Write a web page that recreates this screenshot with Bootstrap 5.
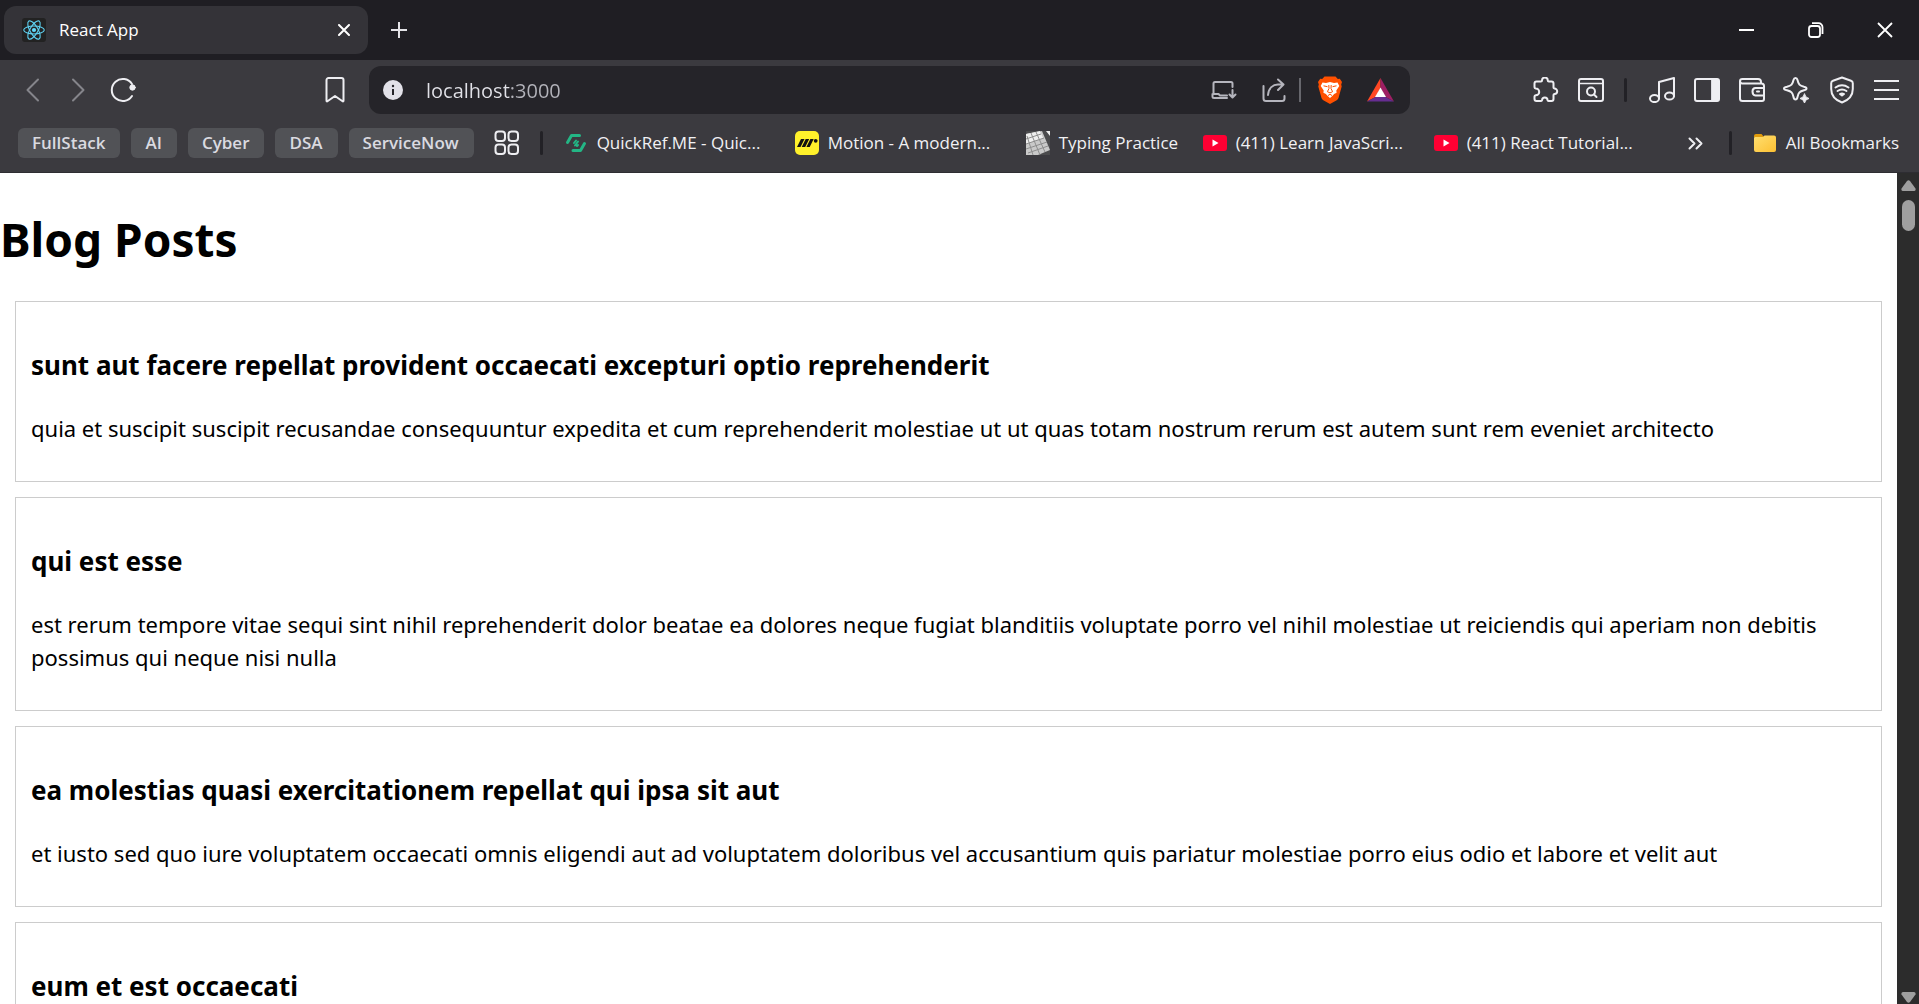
<!DOCTYPE html>
<html lang="en">
<head>
<meta charset="utf-8">
<meta name="viewport" content="width=device-width, initial-scale=1">
<title>React App</title>
<link href="https://cdn.jsdelivr.net/npm/bootstrap@5.3.0/dist/css/bootstrap.min.css" rel="stylesheet">
<style>
  body { font-family: "Open Sans", "Noto Sans", sans-serif; color: #000; background: #fff; }
  svg { display: block; flex: none; }
  .ico { fill: none; stroke: #eeeef2; stroke-width: 2; stroke-linecap: round; stroke-linejoin: round; }
  .dim { stroke: #85858b; }
  .soft { stroke: #b5b5bd; }

  .tabstrip { height: 60px; background: #1f1e23; padding: 6px 0 6px 4px; }
  .tab { width: 364px; border-radius: 12px; background: #343338; padding: 0 18px; gap: 13px; color: #fff; font-size: 17px; }
  .plain { background: none; border: 0; padding: 0; display: flex; align-items: center; justify-content: center; flex: none; }
  .newtab { width: 62px; }
  .winbtn { width: 69px; }

  .toolbar { background: #3b3a3f; height: 60px; padding: 6px 10px 0; }
  .toolbtn { width: 45px; height: 48px; }
  .leading { width: 347px; margin-right: 12px; }
  .trailing { margin-left: 113px; }
  .urlbar { height: 48px; border-radius: 12px; background: #252429; padding: 0 5px 0 14px; }
  .urlbar input { background: none; border: 0; outline: 0; padding: 2px 0 0; margin-left: 23px; color: #dcdce2; font-size: 20px; min-width: 0; }
  .urlbar input { background: linear-gradient(to right, #e2e2e8 85px, #b4b4bb 85px) text; -webkit-background-clip: text; -webkit-text-fill-color: transparent; }
  .urlbtn { width: 50px; height: 48px; }
  .rule { width: 3px; height: 24px; border-radius: 2px; background: #222126; flex: none; }
  .trailing .rule { margin: 0 12px 0 11px; }
  .rule-light { width: 2px; background: #67676d; border-radius: 0; margin-right: 4px; }

  .bookmarks { background: #3b3a3f; height: 53px; padding: 8px 20px 14px 18px; border-bottom: 1px solid #2e2d32; font-size: 17px; }
  .bookmarks a { color: #f1f1f4; text-decoration: none; white-space: nowrap; }
  .bookmarks .chip { height: 30px; padding: 0 15px 0 14px; border-radius: 6px; background: #515256; color: #dadae0; font-size: 17px; font-weight: 600; line-height: 30px; border: 0; }
  .chips { gap: 11px; }
  .groups { margin: 0 20px; }
  .marks { gap: 24px; margin-left: 21px; }
  .mark-link { gap: 9px; }
  .mark-label { width: 174px; }
  .mark-label-short { width: 120px; }
  .more { margin-right: 26px; }
  .rule-end { margin-right: 21px; }

  .page { padding: 0 15px; font-family: "Noto Sans", "Open Sans", sans-serif; }
  .page h1 { font-size: 46px; font-weight: 700; line-height: 64px; margin: 34px -15px 30px; }
  .post { border: 1px solid #ccc; padding: 15px; margin-bottom: 15px; }
  .post h3 { font-size: 26px; font-weight: 700; line-height: 37px; margin: 30px 0 28px; }
  .post p { font-size: 22px; line-height: 33px; margin: 0 0 21px; }
  .scrollbar { width: 22px; background: #2c2c2c; padding: 7px 0 1px; flex: none; }
  .thumb { width: 13px; height: 31px; border-radius: 7px; background: #9f9f9f; margin-top: 9px; }
</style>
</head>
<body>
<div class="d-flex flex-column vh-100 overflow-hidden">

  <header class="flex-shrink-0">
    <div class="tabstrip d-flex">
      <div class="tab d-flex align-items-center">
        <svg width="24" height="24" viewBox="0 0 24 24"><rect width="24" height="24" rx="3" fill="#222"/><g fill="none" stroke="#5fd3f3" stroke-width="1.1"><ellipse cx="12" cy="12" rx="10.3" ry="4"/><ellipse cx="12" cy="12" rx="10.3" ry="4" transform="rotate(60 12 12)"/><ellipse cx="12" cy="12" rx="10.3" ry="4" transform="rotate(120 12 12)"/></g><circle cx="12" cy="12" r="2.1" fill="#61dafb"/></svg>
        <span class="flex-grow-1">React App</span>
        <button class="plain" aria-label="Close tab"><svg class="ico" width="12" height="12" viewBox="0 0 12 12"><path d="M1 1l10 10M11 1L1 11" stroke="#fff"/></svg></button>
      </div>
      <button class="plain newtab" aria-label="New tab"><svg width="16" height="16" viewBox="0 0 16 16"><path d="M8 0v16M0 8h16" stroke="#e4e4e8" stroke-width="2"/></svg></button>
      <div class="d-flex ms-auto">
        <button class="plain winbtn" aria-label="Minimize"><svg width="15" height="15" viewBox="0 0 15 15"><path d="M0 7h15" stroke="#fff" stroke-width="2"/></svg></button>
        <button class="plain winbtn" aria-label="Restore"><svg width="16" height="16" viewBox="0 0 16 16" fill="none" stroke="#fff" stroke-width="1.8"><rect x="1" y="4" width="11" height="11" rx="2.5"/><path d="M4 1.2h6.5a4 4 0 0 1 4 4V12"/></svg></button>
        <button class="plain winbtn" aria-label="Close"><svg width="16" height="16" viewBox="0 0 16 16"><path d="M1 1l14 14M15 1L1 15" stroke="#fff" stroke-width="1.8"/></svg></button>
      </div>
    </div>

    <nav class="toolbar d-flex align-items-start" aria-label="Browser toolbar">
      <div class="leading d-flex flex-shrink-0">
        <button class="plain toolbtn" aria-label="Back"><svg class="ico dim" width="24" height="24" viewBox="0 0 24 24"><path d="M17 1.500L6.500 12 17 22.500"/></svg></button>
        <button class="plain toolbtn" aria-label="Forward"><svg class="ico dim" width="24" height="24" viewBox="0 0 24 24"><path d="M7 1.500L17.500 12 7 22.500"/></svg></button>
        <button class="plain toolbtn" aria-label="Reload"><svg class="ico" width="26" height="26" viewBox="0 0 26 26"><path d="M22 19A11 11 0 1 1 22 7"/><circle cx="22.500" cy="10.500" r="2.700" fill="#eeeef2" stroke-width="1"/></svg></button>
        <button class="plain toolbtn ms-auto" aria-label="Bookmark this page"><svg class="ico" width="20" height="26" viewBox="0 0 20 26"><path d="M1.500 3a2 2 0 0 1 2-2h13a2 2 0 0 1 2 2v20.500q0 1.500-1.300.5L10 19l-7.200 5q-1.300 1-1.300-.5z"/></svg></button>
      </div>

      <div class="urlbar d-flex align-items-center flex-grow-1">
        <svg width="20" height="20" viewBox="0 0 20 20"><circle cx="10" cy="10" r="10" fill="#e2e1e8"/><path d="M10 9v6" stroke="#252429" stroke-width="2"/><circle cx="10" cy="6" r="1.200" fill="#252429"/></svg>
        <input class="flex-grow-1" type="text" value="localhost:3000" aria-label="Address">
        <button class="plain urlbtn" aria-label="Install app"><svg class="ico soft" width="26" height="18" viewBox="0 0 26 18"><path d="M21.500 6V2.500q0-1.500-1.500-1.500H4Q2.500 1 2.500 2.500V13M1.500 13h6l1.500 1.500h7M1.500 13v2.500q0 1.500 1.500 1.500h13M21.500 9v7M18.500 13.500l3 3 3-3"/></svg></button>
        <button class="plain urlbtn" aria-label="Share"><svg class="ico soft" width="24" height="24" viewBox="0 0 24 24"><path d="M1.500 8v12.500q0 2.500 2.500 2.500h16q2.500 0 2.500-2.500V18M6 17c.5-7 5-10.500 10-10.500h5M16 1.500l5.500 5-5.500 5.500"/></svg></button>
        <span class="rule rule-light"></span>
        <button class="plain urlbtn" aria-label="Brave Shields"><svg width="24" height="28" viewBox="0 0 24 28"><path d="M6.500.5h11l2.300 2.500 2-.2L24 6l-.8 2.500.5 2-3.200 11.500q-.5 1.500-1.800 2.300L12 28l-6.700-3.700Q4 23.500 3.500 22L.3 10.500l.5-2L0 6l2.200-3.200 2 .2z" fill="#ff5000"/><path d="M4.500 6.500l3.500.6 4-1 4 1 3.500-.6 1.800 3.500-3 4.500.3 2.300-2.500 1.200-1.800 2L12 22l-2.300-2-1.800-2-2.500-1.200.3-2.300-3-4.500z" fill="#fff"/><path d="M5.500 9.800l4 .9M18.500 9.800l-4 .9M10.800 9l.2 3.500-1.600 3.200 2.600 1.200 2.600-1.200-1.600-3.200.2-3.500M10 19.500l2-1.200 2 1.200" fill="none" stroke="#ff5000" stroke-width="1"/></svg></button>
        <button class="plain urlbtn" aria-label="Brave Rewards"><svg width="27" height="24" viewBox="0 0 27 24"><path d="M13.500 0L0 23.500l8.500-4.500 5-9z" fill="#ff4724"/><path d="M13.500 0L27 23.500 18.500 19l-5-9z" fill="#9e1f63"/><path d="M0 23.500h27L18.500 19h-10z" fill="#662d91"/><path d="M13.500 9.500l5.500 9.500H8z" fill="#fff"/></svg></button>
      </div>

      <div class="trailing d-flex align-items-center flex-shrink-0">
        <button class="plain toolbtn" aria-label="Extensions"><svg class="ico" width="26" height="26" viewBox="0 0 26 26"><path d="M3.500 4.500h4.500q1 0 1-1a2.900 2.900 0 0 1 5.800 0q0 1 1 1H18.500q2 0 2 2v4q0 .8 1 1.100a2.700 2.700 0 0 1 0 5.400q-1 .3-1 1.100v4q0 2-2 2h-3q-.8 0-1-1a2.700 2.700 0 0 0-5.400 0q-.2 1-1 1H3.500q-2 0-2-2v-2.500q0-1 1.300-1.300a3.400 3.400 0 0 0 0-6.800q-1.300-.3-1.300-1.300V6.500q0-2 2-2z"/></svg></button>
        <button class="plain toolbtn" aria-label="Search page"><svg class="ico" width="26" height="24" viewBox="0 0 26 24"><rect x="1" y="1" width="24" height="22" rx="2"/><path d="M1.500 5.500h23" stroke-width="1.600"/><circle cx="13" cy="13.500" r="4"/><path d="M16 16.500l2.500 2.500"/></svg></button>
        <span class="rule"></span>
        <button class="plain toolbtn" aria-label="Media"><svg class="ico" width="26" height="26" viewBox="0 0 26 26"><ellipse cx="5.500" cy="21.500" rx="4.500" ry="3.600"/><ellipse cx="20.500" cy="19" rx="4.500" ry="3.600"/><path d="M10 21.500V5L25 1v18"/></svg></button>
        <button class="plain toolbtn" aria-label="Sidebar"><svg class="ico" width="26" height="24" viewBox="0 0 26 24"><rect x="1" y="1" width="24" height="22" rx="2"/><path d="M18 1h5q2 0 2 2v18q0 2-2 2h-5z" fill="#eeeef2" stroke-width="1"/></svg></button>
        <button class="plain toolbtn" aria-label="Wallet"><svg class="ico" width="26" height="24" viewBox="0 0 26 24"><path d="M1 3v17.500Q1 23 3.500 23H23q2 0 2-2V8q0-2.500-2.500-2.500H3Q1 5 1 3q0-2 2.500-2H19q3 0 3 3v1.500M25 10h-8.500q-3 0-3 3.500t3 4H25M18 13.500h2"/></svg></button>
        <button class="plain toolbtn" aria-label="Assistant"><svg class="ico" width="27" height="26" viewBox="0 0 27 26"><path d="M12.500 1q1.500 0 2 2c1 4.500 2 5.500 6.500 6.700q2.500.6 2.500 1.800t-2.500 1.800c-4.500 1.200-5.500 2.200-6.500 6.700q-.5 2.500-2 2.500t-2-2.500c-1-4.500-2-5.500-6.500-6.700Q1 12.700 1 11.500t3-1.800c4.500-1.200 5.500-2.200 6.500-6.700q.5-2 2-2z"/><path d="M21.500 17q.8 4 4.500 4.500-3.700.5-4.500 4.500-.8-4-4.500-4.500 3.700-.5 4.500-4.500z" fill="#eeeef2" stroke="#eeeef2" stroke-width="1"/></svg></button>
        <button class="plain toolbtn" aria-label="VPN"><svg class="ico" width="24" height="28" viewBox="0 0 24 28"><path d="M12 1.500l9 3.200q1.800.6 1.800 2.500V13c0 6.500-4 11-10.800 13.500C5.200 24 1.200 19.500 1.200 13V7.200q0-1.900 1.800-2.500z"/><path d="M5.500 11.500q6.500-4.500 13 0M7.500 15q4.500-3 9 0"/><path d="M10 18q2-1.200 4 0l-2 1.500z" fill="#eeeef2"/></svg></button>
        <button class="plain toolbtn" aria-label="Menu"><svg width="25" height="22" viewBox="0 0 25 22"><path d="M0 2h25M0 11h25M0 20h25" stroke="#eeeef2" stroke-width="2"/></svg></button>
      </div>
    </nav>

    <nav class="bookmarks d-flex align-items-center" aria-label="Bookmarks">
      <div class="chips d-flex flex-shrink-0">
        <button class="chip">FullStack</button>
        <button class="chip">AI</button>
        <button class="chip">Cyber</button>
        <button class="chip">DSA</button>
        <button class="chip">ServiceNow</button>
      </div>
      <button class="plain groups" aria-label="Tab groups"><svg class="ico" width="26" height="26" viewBox="0 0 26 26"><rect x="1.500" y="1.500" width="9.500" height="9.500" rx="3"/><rect x="14.500" y="1.500" width="9.500" height="9.500" rx="3"/><rect x="1.500" y="14.500" width="9.500" height="9.500" rx="3"/><rect x="14.500" y="14.500" width="9.500" height="9.500" rx="3"/></svg></button>
      <span class="rule"></span>
      <div class="marks d-flex flex-grow-1">
        <a class="mark-link d-flex align-items-center" href="#">
          <svg width="24" height="24" viewBox="0 0 24 24" fill="none" stroke="#23b685" stroke-width="3" stroke-linecap="round" stroke-linejoin="round"><path d="M3.500 11.500L7.500 4.500h8M20.500 12.500l-4 7H9"/><path d="M12 9.500l-2 2.500M14 10.500l-3 4M14 14l-1 1" stroke-width="2"/></svg>
          <span class="mark-label">QuickRef.ME - Quic...</span></a>
        <a class="mark-link d-flex align-items-center" href="#">
          <svg width="24" height="24" viewBox="0 0 24 24"><rect width="24" height="24" rx="5" fill="#fff12b"/><path d="M6 8h3.500L5.500 16H2zM10.700 8h3.500l-4 8H6.700zM15.400 8h3.300l-4 8h-3.300z" fill="#111"/><circle cx="20.700" cy="9.800" r="1.900" fill="#111"/></svg>
          <span class="mark-label">Motion - A modern...</span></a>
        <a class="mark-link d-flex align-items-center" href="#">
          <svg width="24" height="24" viewBox="0 0 24 24"><path d="M0 0h24v24H0z" fill="#4b4b4d"/><path d="M0 3L16 0l8 19-12 5H0z" fill="#c9c9c9"/><path d="M0 3l14-3 3 7-17 6zM20 0h4v5z" fill="#eee"/><path d="M0 8l15-5M0 13l18-6M0 18l21-7M2 22l20-7M5 2l9 22M10 1l9 20M1 5l6 19" stroke="#8e8e8e" fill="none"/></svg>
          <span class="mark-label-short">Typing Practice</span></a>
        <a class="mark-link d-flex align-items-center" href="#">
          <svg width="24" height="24" viewBox="0 0 24 24"><rect y="4" width="24" height="16" rx="3" fill="#ff0033"/><path d="M9.500 8.500l6 3.500-6 3.500z" fill="#fff"/></svg>
          <span class="mark-label">(411) Learn JavaScri...</span></a>
        <a class="mark-link d-flex align-items-center" href="#">
          <svg width="24" height="24" viewBox="0 0 24 24"><rect y="4" width="24" height="16" rx="3" fill="#ff0033"/><path d="M9.500 8.500l6 3.500-6 3.500z" fill="#fff"/></svg>
          <span class="mark-label">(411) React Tutorial...</span></a>
      </div>
      <button class="plain more" aria-label="More bookmarks"><svg class="ico" width="15" height="13" viewBox="0 0 15 13"><path d="M1.500 1.500l5 5-5 5M8.500 1.500l5 5-5 5"/></svg></button>
      <span class="rule rule-end"></span>
      <a class="mark-link d-flex align-items-center" href="#">
        <svg width="24" height="20" viewBox="0 0 24 20"><defs><linearGradient id="folder" x1="0" y1="0" x2="1" y2="1"><stop offset="0" stop-color="#ffdf70"/><stop offset="1" stop-color="#fcc033"/></linearGradient></defs><path d="M1 3q0-2 2-2h5.500L11 4H1z" fill="#e09b0c"/><path d="M1 5q0-1 1-1h8l1.500-1.500H21q2 0 2 2V17q0 2-2 2H3q-2 0-2-2z" fill="url(#folder)"/></svg>
        <span>All Bookmarks</span></a>
    </nav>
  </header>

  <div class="d-flex flex-grow-1 overflow-hidden">
    <main class="page flex-grow-1 overflow-hidden">
      <h1>Blog Posts</h1>
      <article class="post">
        <h3>sunt aut facere repellat provident occaecati excepturi optio reprehenderit</h3>
        <p>quia et suscipit suscipit recusandae consequuntur expedita et cum reprehenderit molestiae ut ut quas totam nostrum rerum est autem sunt rem eveniet architecto</p>
      </article>
      <article class="post">
        <h3>qui est esse</h3>
        <p>est rerum tempore vitae sequi sint nihil reprehenderit dolor beatae ea dolores neque fugiat blanditiis voluptate porro vel nihil molestiae ut reiciendis qui aperiam non debitis possimus qui neque nisi nulla</p>
      </article>
      <article class="post">
        <h3>ea molestias quasi exercitationem repellat qui ipsa sit aut</h3>
        <p>et iusto sed quo iure voluptatem occaecati omnis eligendi aut ad voluptatem doloribus vel accusantium quis pariatur molestiae porro eius odio et labore et velit aut</p>
      </article>
      <article class="post">
        <h3>eum et est occaecati</h3>
      </article>
    </main>
    <div class="scrollbar d-flex flex-column align-items-center" aria-hidden="true">
      <svg width="15" height="11" viewBox="0 0 15 11"><path d="M6 1q1.500-1.500 3 0l5.500 7.500Q15 11 13 11H2Q0 11 .5 8.500z" fill="#9f9f9f"/></svg>
      <div class="thumb"></div>
      <svg class="mt-auto" width="15" height="11" viewBox="0 0 15 11"><path d="M6 10q1.500 1.500 3 0l5.500-7.500Q15 0 13 0H2Q0 0 .5 2.500z" fill="#9f9f9f"/></svg>
    </div>
  </div>
</div>
<script src="https://cdn.jsdelivr.net/npm/bootstrap@5.3.0/dist/js/bootstrap.bundle.min.js"></script>
</body>
</html>
